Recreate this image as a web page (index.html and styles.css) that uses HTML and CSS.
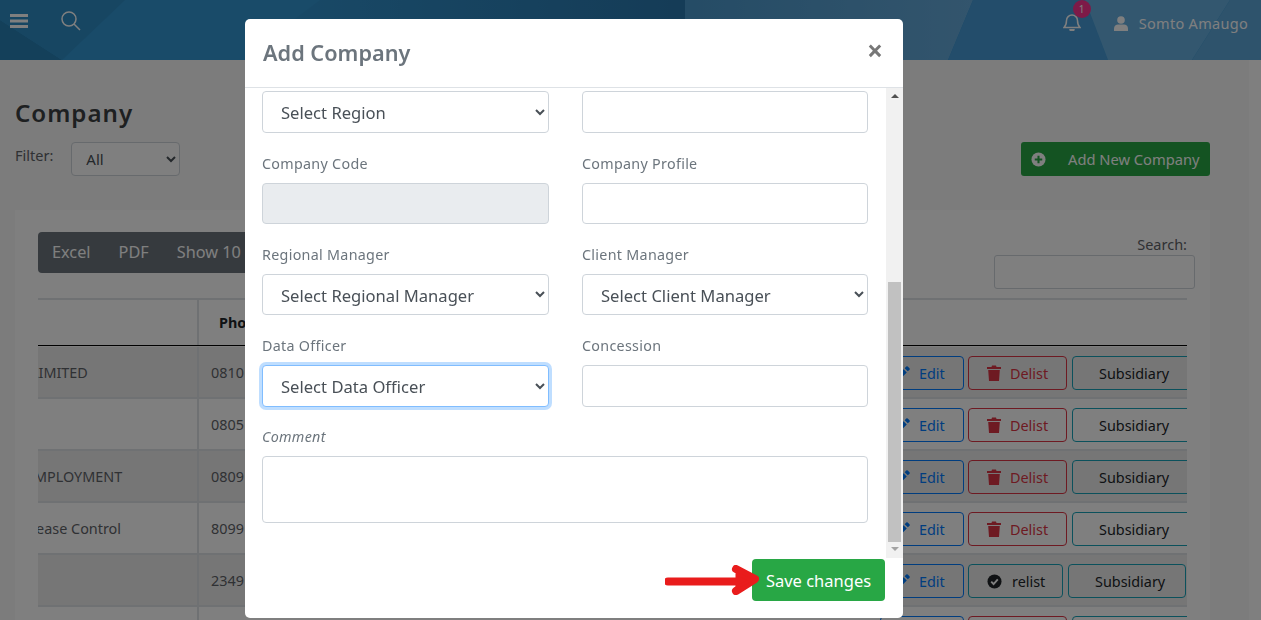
FILE: index.html
```html
<!DOCTYPE html>
<html lang="en">
<head>
    <meta charset="UTF-8">
    <meta name="viewport" content="width=device-width, initial-scale=1.0">
    <title>Company</title>
    <link rel="stylesheet" href="styles.css">
</head>
<body>
    <div class="page">
        <header class="topbar">
            <svg class="topbar-bg" viewBox="0 0 1261 60" preserveAspectRatio="none">
                <defs>
                    <linearGradient id="centerFade" x1="0" y1="0" x2="1" y2="0">
                        <stop offset="0" stop-color="#3296d2"/>
                        <stop offset="1" stop-color="#2a78ae"/>
                    </linearGradient>
                    <linearGradient id="rightFade" x1="0" y1="0" x2="1" y2="0">
                        <stop offset="0" stop-color="#4a98cc"/>
                        <stop offset="1" stop-color="#66aada"/>
                    </linearGradient>
                </defs>
                <polygon points="0,0 1261,0 1261,60 0,60" fill="#3296d2"/>
                <polygon points="0,20 62,60 0,60" fill="#2880b4"/>
                <polygon points="0,0 125,0 62,60 0,20" fill="#2e8cc4"/>
                <polygon points="320,0 685,0 685,60 240,60" fill="url(#centerFade)"/>
                <polygon points="685,0 973,0 948,60 685,60" fill="url(#rightFade)"/>
                <polygon points="973,0 1085,0 1108,60 948,60" fill="#469ad6"/>
                <polygon points="1085,0 1230,0 1192,60 1108,60" fill="#66aedf"/>
                <polygon points="1230,0 1261,0 1261,60 1192,60" fill="#5ca6d8"/>
            </svg>
            <div class="topbar-left">
                <svg class="icon-menu" viewBox="0 0 18 14"><path d="M0 1.500h18M0 7h18M0 12.500h18" stroke="#fff" stroke-width="3"/></svg>
                <svg class="icon-search" viewBox="0 0 20 20" fill="none" stroke="#fff" stroke-width="1.500"><circle cx="8" cy="8" r="7"/><path d="M13 13l6 6"/></svg>
            </div>
            <div class="topbar-right">
                <div class="bell">
                    <svg class="icon-bell" viewBox="0 0 18 18" fill="none" stroke="#fff" stroke-width="1.500"><path d="M1 14.500c2-2 2.500-3 2.500-7a5.500 5.500 0 0 1 11 0c0 4 .5 5 2.500 7z"/><path d="M7 16a2 2 0 0 0 4 0" fill="#fff"/></svg>
                    <span class="badge">1</span>
                </div>
                <svg class="icon-user" viewBox="0 0 14 15" fill="#fff"><circle cx="7" cy="4" r="3.800"/><path d="M0 15v-2.500C0 10 2 8.500 4 8.500h6c2 0 4 1.500 4 4V15z"/></svg>
                <span class="user-name">Somto Amaugo</span>
            </div>
        </header>

        <main class="content">
            <h1 class="page-title">Company</h1>
            <div class="filter-row">
                <div class="filter">
                    <label class="filter-label">Filter:</label>
                    <select class="filter-select"><option>All</option></select>
                </div>
                <button class="btn-add">
                    <svg class="icon-plus" viewBox="0 0 16 16"><circle cx="8" cy="8" r="7.500" fill="#fff"/><path d="M8 4v8M4 8h8" stroke="#28a745" stroke-width="2.200"/></svg>
                    <span>Add New Company</span>
                </button>
            </div>

            <section class="card">
                <div class="toolbar">
                    <div class="dt-buttons">
                        <span>Excel</span>
                        <span>PDF</span>
                        <span>Show 10</span>
                    </div>
                    <div class="dt-search">
                        <label>Search:</label>
                        <input type="text" class="search-input">
                    </div>
                </div>
                <div class="table-clip">
                    <div class="row row-head">
                        <div class="cell"></div>
                        <div class="cell cell-phone"><b>Pho</b></div>
                        <div class="cell"></div>
                    </div>
                    <div class="row stripe">
                        <div class="cell cell-name"><span class="clip-limited">LIMITED</span></div>
                        <div class="cell cell-phone">0810</div>
                        <div class="cell cell-actions">
                            <a class="act act-edit"><svg class="icon-pen" viewBox="0 0 14 14"><path d="M0 14l1-4 7-7 3 3-7 7zM9 2l1.500-1.500a1 1 0 0 1 1.400 0l1.600 1.600a1 1 0 0 1 0 1.400L12 5z"/></svg>Edit</a>
                            <a class="act act-delist"><svg class="icon-trash" viewBox="0 0 14 16"><path d="M0 2h4.500l.5-1.500h4L9.500 2H14v2H0zM1.200 5h11.600l-.8 11H2z"/></svg>Delist</a>
                            <a class="act act-sub">Subsidiary</a>
                        </div>
                    </div>
                    <div class="row">
                        <div class="cell cell-name"></div>
                        <div class="cell cell-phone">0805</div>
                        <div class="cell cell-actions">
                            <a class="act act-edit"><svg class="icon-pen" viewBox="0 0 14 14"><path d="M0 14l1-4 7-7 3 3-7 7zM9 2l1.500-1.500a1 1 0 0 1 1.400 0l1.600 1.600a1 1 0 0 1 0 1.400L12 5z"/></svg>Edit</a>
                            <a class="act act-delist"><svg class="icon-trash" viewBox="0 0 14 16"><path d="M0 2h4.500l.5-1.500h4L9.500 2H14v2H0zM1.200 5h11.600l-.8 11H2z"/></svg>Delist</a>
                            <a class="act act-sub">Subsidiary</a>
                        </div>
                    </div>
                    <div class="row stripe">
                        <div class="cell cell-name"><span class="clip-employment">EMPLOYMENT</span></div>
                        <div class="cell cell-phone">0809</div>
                        <div class="cell cell-actions">
                            <a class="act act-edit"><svg class="icon-pen" viewBox="0 0 14 14"><path d="M0 14l1-4 7-7 3 3-7 7zM9 2l1.500-1.500a1 1 0 0 1 1.400 0l1.600 1.600a1 1 0 0 1 0 1.400L12 5z"/></svg>Edit</a>
                            <a class="act act-delist"><svg class="icon-trash" viewBox="0 0 14 16"><path d="M0 2h4.500l.5-1.500h4L9.500 2H14v2H0zM1.200 5h11.600l-.8 11H2z"/></svg>Delist</a>
                            <a class="act act-sub">Subsidiary</a>
                        </div>
                    </div>
                    <div class="row">
                        <div class="cell cell-name"><span class="clip-disease">Disease Control</span></div>
                        <div class="cell cell-phone">8099</div>
                        <div class="cell cell-actions">
                            <a class="act act-edit"><svg class="icon-pen" viewBox="0 0 14 14"><path d="M0 14l1-4 7-7 3 3-7 7zM9 2l1.500-1.500a1 1 0 0 1 1.400 0l1.600 1.600a1 1 0 0 1 0 1.400L12 5z"/></svg>Edit</a>
                            <a class="act act-delist"><svg class="icon-trash" viewBox="0 0 14 16"><path d="M0 2h4.500l.5-1.500h4L9.500 2H14v2H0zM1.200 5h11.600l-.8 11H2z"/></svg>Delist</a>
                            <a class="act act-sub">Subsidiary</a>
                        </div>
                    </div>
                    <div class="row stripe">
                        <div class="cell cell-name"></div>
                        <div class="cell cell-phone">2349</div>
                        <div class="cell cell-actions">
                            <a class="act act-edit"><svg class="icon-pen" viewBox="0 0 14 14"><path d="M0 14l1-4 7-7 3 3-7 7zM9 2l1.500-1.500a1 1 0 0 1 1.400 0l1.600 1.600a1 1 0 0 1 0 1.400L12 5z"/></svg>Edit</a>
                            <a class="act act-relist"><svg class="icon-check" viewBox="0 0 16 16"><circle cx="8" cy="8" r="7.500" fill="#212529"/><path d="M4.500 8.200l2.500 2.500 4.500-5" fill="none" stroke="#fff" stroke-width="2"/></svg>relist</a>
                            <a class="act act-sub act-sub-short">Subsidiary</a>
                        </div>
                    </div>
                    <div class="row">
                        <div class="cell cell-name"></div>
                        <div class="cell cell-phone"></div>
                        <div class="cell cell-actions">
                            <a class="act act-edit"></a>
                            <a class="act act-delist"></a>
                            <a class="act act-sub"></a>
                        </div>
                    </div>
                </div>
            </section>
        </main>
    </div>

    <div class="backdrop"></div>

    <div class="modal">
        <div class="modal-header">
            <h2 class="modal-title">Add Company</h2>
            <span class="modal-close">&times;</span>
        </div>
        <div class="modal-body">
            <form class="modal-form">
                <div class="form-group">
                    <select class="field"><option>Select Region</option></select>
                </div>
                <div class="form-group">
                    <input type="text" class="field">
                </div>
                <div class="form-group">
                    <label>Company Code</label>
                    <input type="text" class="field field-disabled" disabled>
                </div>
                <div class="form-group">
                    <label>Company Profile</label>
                    <input type="text" class="field">
                </div>
                <div class="form-group">
                    <label>Regional Manager</label>
                    <select class="field"><option>Select Regional Manager</option></select>
                </div>
                <div class="form-group">
                    <label>Client Manager</label>
                    <select class="field"><option>Select Client Manager</option></select>
                </div>
                <div class="form-group">
                    <label>Data Officer</label>
                    <select class="field field-focus"><option>Select Data Officer</option></select>
                </div>
                <div class="form-group">
                    <label>Concession</label>
                    <input type="text" class="field">
                </div>
                <div class="form-group form-wide">
                    <label class="label-comment">Comment</label>
                    <textarea class="field field-area"></textarea>
                </div>
            </form>
            <div class="scrollbar">
                <span class="scroll-up"></span>
                <span class="scroll-thumb"></span>
                <span class="scroll-down"></span>
            </div>
        </div>
        <div class="modal-footer">
            <button class="btn-save">Save changes</button>
            <svg class="red-arrow" viewBox="0 0 94 30" fill="none" stroke="#e91c1c" stroke-linecap="round" stroke-linejoin="round"><path d="M3 16.500H84" stroke-width="8"/><path d="M71 4L90 14L71 26" stroke-width="8"/><path d="M72 9L86 15L72 22z" fill="#e91c1c" stroke-width="3"/></svg>
        </div>
    </div>
</body>
</html>
```

FILE: styles.css
```css
html {
    overflow: hidden;
}

body {
    margin: 0;
    height: 620px;
    overflow: hidden;
    font-family: "Noto Sans", Arial, sans-serif;
    background-color: #ffffff;
    color: #5f6368;
}

.page {
    height: 620px;
    overflow: hidden;
}

/* top bar */
.topbar {
    position: relative;
    height: 60px;
    display: flex;
    justify-content: space-between;
    overflow: hidden;
}

.topbar-bg {
    position: absolute;
    top: 0;
    left: 0;
    width: 100%;
    height: 100%;
}

.topbar-left,
.topbar-right {
    position: relative;
    display: flex;
}

.icon-menu {
    width: 18px;
    height: 14px;
    margin: 14px 0 0 10px;
}

.icon-search {
    width: 20px;
    height: 20px;
    margin: 11px 0 0 33px;
}

.topbar-right {
    padding-right: 13px;
}

.bell {
    position: relative;
    margin-right: 33px;
}

.icon-bell {
    display: block;
    width: 18px;
    height: 18px;
    margin-top: 13px;
}

.badge {
    position: absolute;
    top: 0;
    left: 10px;
    width: 18px;
    height: 18px;
    border-radius: 50%;
    background-color: #fa3490;
    color: #fff;
    font-size: 10px;
    line-height: 18px;
    text-align: center;
}

.icon-user {
    width: 14px;
    height: 15px;
    margin: 16px 11px 0 0;
}

.user-name {
    color: #fff;
    font-size: 14.500px;
    letter-spacing: 0.3px;
    line-height: 46px;
}

/* page content */
.content {
    width: 1195px;
    height: 560px;
    padding: 0 39px 0 15px;
    background-color: #f8f8f8;
}

.page-title {
    margin: 0;
    padding-top: 36px;
    font-size: 24.100px;
    font-weight: 600;
    line-height: 34px;
    letter-spacing: 1px;
    color: #3c4043;
}

.filter-row {
    display: flex;
    justify-content: space-between;
    margin-top: 12px;
}

.filter {
    display: flex;
    align-items: flex-start;
}

.filter-label {
    margin-right: 18px;
    font-size: 14.500px;
    line-height: 27px;
}

.filter-select {
    width: 109px;
    height: 34px;
    padding-left: 10px;
    border: 1px solid #ced4da;
    border-radius: 4px;
    background-color: #fff;
    color: #495057;
    font-family: inherit;
    font-size: 15px;
}

.btn-add {
    display: flex;
    align-items: center;
    width: 189px;
    height: 34px;
    padding: 0 0 0 10px;
    border: none;
    border-radius: 3px;
    background-color: #28a745;
    color: #fff;
    font-family: inherit;
    font-size: 14.700px;
}

.icon-plus {
    width: 15px;
    height: 15px;
    margin-right: 22px;
}

.card {
    margin-top: 34px;
    padding: 22px 23px 0;
    background-color: #ffffff;
    height: 410px;
    width: 1195px;
    box-sizing: border-box;
    overflow: hidden;
}

.toolbar {
    display: flex;
    justify-content: space-between;
    width: 1157px;
    height: 66px;
}

.dt-buttons {
    display: flex;
    gap: 28px;
    box-sizing: border-box;
    width: 300px;
    height: 41px;
    padding: 0 14px;
    border-radius: 4px;
    background-color: #6c757d;
    color: #fff;
    font-size: 16.300px;
    line-height: 41px;
}

.dt-search {
    display: flex;
    flex-direction: column;
    align-items: flex-end;
    font-size: 14.500px;
    padding-top: 2px;
}

.dt-search label {
    margin-right: 8px;
    line-height: 21px;
}

.search-input {
    width: 201px;
    height: 34px;
    box-sizing: border-box;
    border: 1px solid #ced4da;
    border-radius: 3px;
}

.table-clip {
    width: 1149px;
    overflow: hidden;
    border-top: 2px solid #dee2e6;
}

.row {
    display: grid;
    grid-template-columns: 160px 682px 400px;
    height: 50px;
    border-bottom: 2px solid #dee2e6;
    font-size: 14.400px;
}

.row-head {
    height: 45px;
    margin-bottom: 1px;
    border-bottom: 1px solid #000;
}

.row-head b {
    color: #212529;
}

.stripe {
    background-color: rgba(0, 0, 0, 0.07);
}

.cell {
    display: flex;
    align-items: center;
    box-sizing: border-box;
    white-space: nowrap;
    overflow: hidden;
}

.cell-phone {
    padding-left: 12px;
    border-left: 2px solid #dee2e6;
    margin-left: -1px;
}

.row-head .cell-phone {
    padding-left: 20px;
}

.clip-limited {
    margin-left: -7px;
}

.clip-employment {
    margin-left: -12px;
}

.clip-disease {
    margin-left: -23px;
}

.cell-actions {
    gap: 4px;
    overflow: visible;
    align-items: flex-start;
    padding-top: 9px;
}

.act {
    display: flex;
    align-items: center;
    box-sizing: border-box;
    height: 34px;
    border: 1px solid;
    border-radius: 4px;
    flex: none;
}

.act-edit {
    position: relative;
    width: 84px;
    padding-left: 38px;
    border-color: #007bff;
    color: #007bff;
}

.icon-pen {
    position: absolute;
    left: 14px;
    width: 15px;
    height: 15px;
    fill: #007bff;
}

.act-delist {
    width: 99px;
    padding-left: 18px;
    border-color: #dc3545;
    color: #dc3545;
}

.icon-trash {
    width: 14px;
    height: 16px;
    margin-right: 9px;
    fill: #dc3545;
}

.act-relist {
    width: 95px;
    padding-left: 18px;
    border-color: #17a2b8;
    color: #212529;
}

.icon-check {
    width: 15px;
    height: 15px;
    margin-right: 10px;
}

.act-sub {
    width: 128px;
    margin-left: 1px;
    padding-left: 26px;
    border-color: #17a2b8;
    color: #212529;
}

.act-sub-short {
    width: 118px;
}

/* modal */
.backdrop {
    position: fixed;
    top: 0;
    right: 0;
    bottom: 0;
    left: 0;
    background-color: rgba(0, 0, 0, 0.5);
}

.modal {
    position: fixed;
    top: 19px;
    left: 245px;
    width: 658px;
    height: 599px;
    border-radius: 5px;
    background-color: #fff;
    overflow: hidden;
}

.modal-header {
    display: flex;
    justify-content: space-between;
    box-sizing: border-box;
    height: 69px;
    padding: 17px 20px 0 18px;
    border-bottom: 1px solid #dee2e6;
    color: #6c757d;
}

.modal-title {
    margin: 0;
    font-size: 21.700px;
    font-weight: 600;
    line-height: 34px;
}

.modal-close {
    color: #777;
    font-size: 28px;
    font-weight: 700;
    line-height: 28px;
}

.modal-body {
    position: relative;
    height: 470px;
    overflow: hidden;
}

.modal-form {
    display: grid;
    grid-template-columns: 287px 286px;
    column-gap: 33px;
    row-gap: 19.750px;
    padding: 3.250px 0 0 17px;
}

.modal-form label {
    display: block;
    height: 30px;
    font-size: 14.300px;
    line-height: 22px;
    letter-spacing: 0.3px;
    color: #6c757d;
}

.form-wide {
    grid-column: 1 / 3;
}

.modal-form .label-comment {
    font-style: italic;
}

.field {
    display: block;
    box-sizing: border-box;
    width: 100%;
    height: 41.500px;
    padding: 1px 14px 0;
    border: 1px solid #ced4da;
    border-radius: 4px;
    background-color: #fff;
    color: #495057;
    font-family: inherit;
    font-size: 16.600px;
}

.field-disabled {
    background-color: #e9ecef;
}

.field-focus {
    border-color: #80bdff;
    box-shadow: 0 0 0 3px rgba(0, 123, 255, 0.25);
}

.field-area {
    height: 67px;
    resize: none;
}

.scrollbar {
    position: absolute;
    top: 0;
    right: 0;
    display: flex;
    flex-direction: column;
    align-items: center;
    width: 17px;
    height: 100%;
    background-color: #f1f1f1;
}

.scroll-up {
    margin-top: 6px;
    border-left: 4px solid transparent;
    border-right: 4px solid transparent;
    border-bottom: 4px solid #505050;
}

.scroll-thumb {
    width: 13px;
    height: 260px;
    margin-top: 184px;
    background-color: #c1c1c1;
}

.scroll-down {
    margin-top: 5px;
    border-left: 4px solid transparent;
    border-right: 4px solid transparent;
    border-top: 4px solid #a3a3a3;
}

.modal-footer {
    position: relative;
    display: flex;
    justify-content: flex-end;
    padding: 1px 18px 0 0;
}

.btn-save {
    width: 133px;
    height: 42px;
    border: none;
    border-radius: 4px;
    background-color: #28a745;
    color: #fff;
    font-family: inherit;
    font-size: 16.500px;
}

.red-arrow {
    position: absolute;
    top: 7px;
    left: 420px;
    width: 94px;
    height: 30px;
}
```
